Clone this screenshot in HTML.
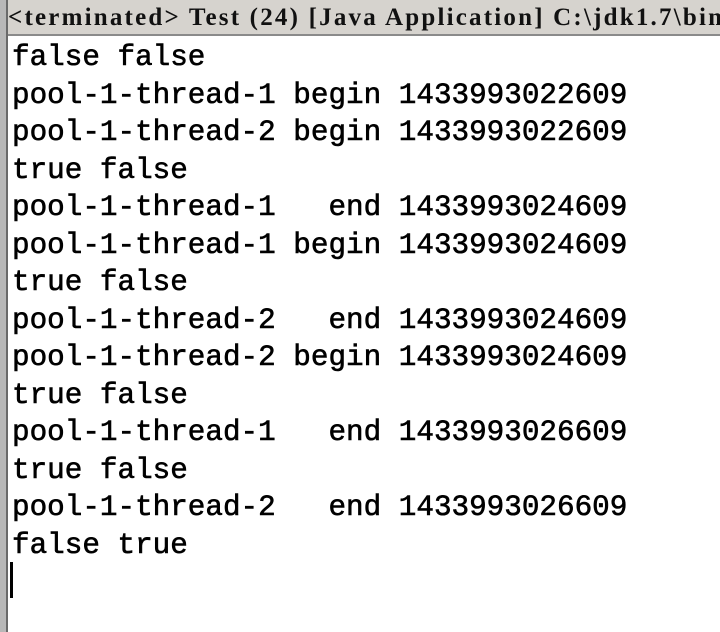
<!DOCTYPE html>
<html><head><style>
body{margin:0;width:720px;height:632px;overflow:hidden;background:#fff;position:relative}
.lb{position:absolute;left:0;top:0;width:6px;height:632px;background:#b8b8b8;border-right:2px solid #6a6a6a}
.hd{position:absolute;left:8px;top:0;width:712px;height:34px;background:#d6d3ce;border-bottom:2px solid #8a8a8a;font:bold 25px "Liberation Serif",serif;color:#111;line-height:36px;padding-left:0px;white-space:nowrap;overflow:hidden;letter-spacing:2.2px}
pre{position:absolute;left:12px;top:39px;margin:0;font:29.3px/37.5px "Liberation Mono",monospace;color:#000;-webkit-text-stroke:0.6px #000}
.cur{position:absolute;left:10px;top:562px;width:3px;height:36px;background:#000}
</style></head><body>
<div class="lb"></div>
<div class="hd">&lt;terminated&gt; Test (24) [Java Application] C:\jdk1.7\bin</div>
<pre>false false
pool-1-thread-1 begin 1433993022609
pool-1-thread-2 begin 1433993022609
true false
pool-1-thread-1   end 1433993024609
pool-1-thread-1 begin 1433993024609
true false
pool-1-thread-2   end 1433993024609
pool-1-thread-2 begin 1433993024609
true false
pool-1-thread-1   end 1433993026609
true false
pool-1-thread-2   end 1433993026609
false true</pre>
<div class="cur"></div>
</body></html>
